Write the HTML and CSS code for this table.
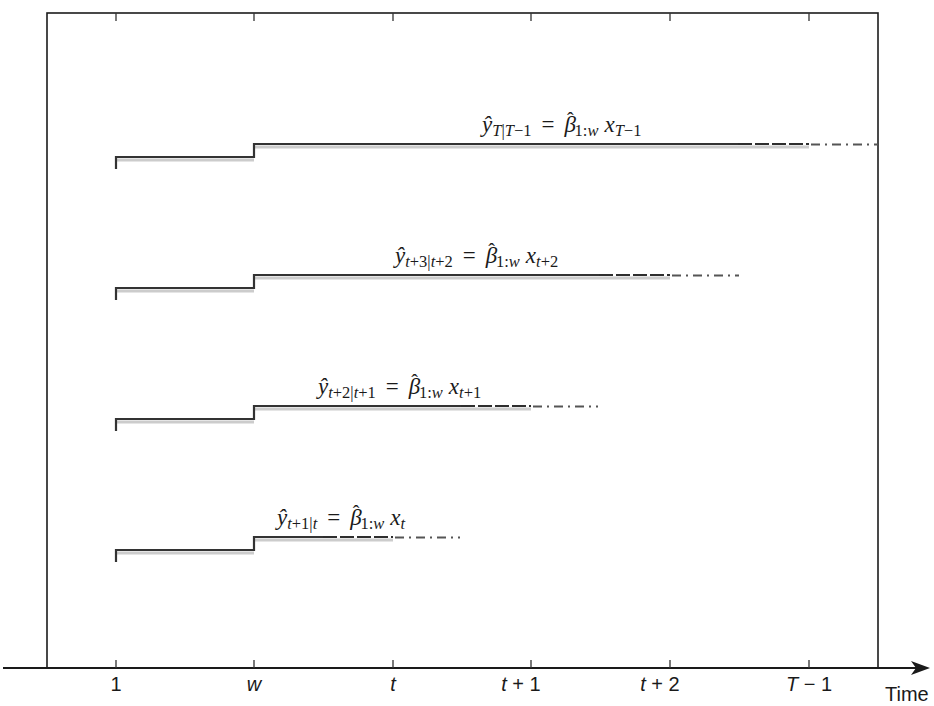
FILE: index.html
```html
<!DOCTYPE html>
<html>
<head>
<meta charset="utf-8">
<link rel="stylesheet" href="styles.css">
</head>
<body>
<div class="canvas">
<svg class="chart" width="934" height="706" viewBox="0 0 934 706" xmlns="http://www.w3.org/2000/svg">
  <!-- frame -->
  <rect class="frame" x="47" y="13" width="831" height="655"/>
  <!-- top ticks -->
  <path class="tick" d="M116 13V21M254 13V21M393 13V21M531 13V21M670 13V21M809 13V21"/>
  <!-- axis -->
  <line class="axis" x1="3" y1="668" x2="916" y2="668"/>
  <polygon class="arrow" points="930,668 911,661 916,668 911,675"/>
  <path class="tick" d="M116 668V660M254 668V660M393 668V660M531 668V660M670 668V660M809 668V660"/>

  <!-- row 1 -->
  <path class="shadow" d="M116 160H254M254 147H809"/>
  <path class="step" d="M116 169V157H254V144H738"/>
  <line class="dense" x1="738" y1="144" x2="809" y2="144"/>
  <line class="dash" x1="811" y1="144.5" x2="878" y2="144.5"/>
  <!-- row 2 -->
  <path class="shadow" d="M116 291H254M254 278H670"/>
  <path class="step" d="M116 300V288H254V275H599"/>
  <line class="dense" x1="599" y1="275" x2="670" y2="275"/>
  <line class="dash" x1="672" y1="275.5" x2="739" y2="275.5"/>
  <!-- row 3 -->
  <path class="shadow" d="M116 422H254M254 409H531"/>
  <path class="step" d="M116 431V419H254V406H461"/>
  <line class="dense" x1="461" y1="406" x2="531" y2="406"/>
  <line class="dash" x1="533" y1="406.5" x2="598" y2="406.5"/>
  <!-- row 4 -->
  <path class="shadow" d="M116 553H254M254 540H393"/>
  <path class="step" d="M116 562V550H254V537H323"/>
  <line class="dense" x1="323" y1="537" x2="393" y2="537"/>
  <line class="dash" x1="395" y1="537.5" x2="460" y2="537.5"/>

  <!-- equation labels -->
  <text class="eq" x="482" y="132">ŷ<tspan class="sub" dy="4">T<tspan class="up">|</tspan>T<tspan class="up">−1</tspan></tspan><tspan class="up" dy="-4" dx="10">=</tspan><tspan dx="10">β</tspan><tspan class="hat up" dx="-9" dy="-5">ˆ</tspan><tspan class="sub up" dx="1" dy="9">1:<tspan class="it">w</tspan></tspan><tspan dy="-4" dx="6">x</tspan><tspan class="sub" dy="4">T<tspan class="up">−1</tspan></tspan></text>

  <text class="eq" x="395" y="263">ŷ<tspan class="sub" dy="4">t<tspan class="up">+3|</tspan>t<tspan class="up">+2</tspan></tspan><tspan class="up" dy="-4" dx="10">=</tspan><tspan dx="10">β</tspan><tspan class="hat up" dx="-9" dy="-5">ˆ</tspan><tspan class="sub up" dx="1" dy="9">1:<tspan class="it">w</tspan></tspan><tspan dy="-4" dx="6">x</tspan><tspan class="sub" dy="4">t<tspan class="up">+2</tspan></tspan></text>

  <text class="eq" x="318" y="394">ŷ<tspan class="sub" dy="4">t<tspan class="up">+2|</tspan>t<tspan class="up">+1</tspan></tspan><tspan class="up" dy="-4" dx="10">=</tspan><tspan dx="10">β</tspan><tspan class="hat up" dx="-9" dy="-5">ˆ</tspan><tspan class="sub up" dx="1" dy="9">1:<tspan class="it">w</tspan></tspan><tspan dy="-4" dx="6">x</tspan><tspan class="sub" dy="4">t<tspan class="up">+1</tspan></tspan></text>

  <text class="eq" x="277" y="525">ŷ<tspan class="sub" dy="4">t<tspan class="up">+1|</tspan>t</tspan><tspan class="up" dy="-4" dx="10">=</tspan><tspan dx="10">β</tspan><tspan class="hat up" dx="-9" dy="-5">ˆ</tspan><tspan class="sub up" dx="1" dy="9">1:<tspan class="it">w</tspan></tspan><tspan dy="-4" dx="6">x</tspan><tspan class="sub" dy="4">t</tspan></text>

  <!-- tick labels -->
  <text class="tl" x="116" y="691">1</text>
  <text class="tl it" x="254" y="691">w</text>
  <text class="tl it" x="393" y="691">t</text>
  <text class="tl" x="521" y="691"><tspan class="it">t</tspan> + 1</text>
  <text class="tl" x="660" y="691"><tspan class="it">t</tspan> + 2</text>
  <text class="tl" x="809" y="691"><tspan class="it">T</tspan> − 1</text>
  <text class="time" x="885" y="701">Time</text>
</svg>
</div>
</body>
</html>
```

FILE: styles.css
```css
html, body {
  margin: 0;
  padding: 0;
  background: #ffffff;
}

.canvas {
  width: 934px;
  height: 706px;
  overflow: hidden;
}

.chart {
  display: block;
}

.frame {
  fill: none;
  stroke: #1c1c1c;
  stroke-width: 1.6;
}

.tick {
  fill: none;
  stroke: #333333;
  stroke-width: 1.3;
}

.axis {
  stroke: #1a1a1a;
  stroke-width: 2;
}

.arrow {
  fill: #1a1a1a;
}

.shadow {
  fill: none;
  stroke: #cccccc;
  stroke-width: 3;
}

.step {
  fill: none;
  stroke: #333333;
  stroke-width: 2.2;
}

.dense {
  stroke: #2e2e2e;
  stroke-width: 2.2;
  stroke-dasharray: 14 3;
}

.dash {
  stroke: #555555;
  stroke-width: 2;
  stroke-dasharray: 9 5 2 5;
}

.eq {
  font-family: "Liberation Serif", "DejaVu Serif", serif;
  font-style: italic;
  font-size: 23px;
  fill: #1a1a1a;
}

.sub {
  font-size: 16.5px;
}

.hat {
  font-size: 20px;
}

.up {
  font-style: normal;
}

.it {
  font-style: italic;
}

.tl {
  font-family: "Liberation Sans", Arial, sans-serif;
  font-size: 20px;
  text-anchor: middle;
  fill: #1a1a1a;
}

.time {
  font-family: "Liberation Sans", Arial, sans-serif;
  font-size: 20px;
  fill: #1a1a1a;
}
```
